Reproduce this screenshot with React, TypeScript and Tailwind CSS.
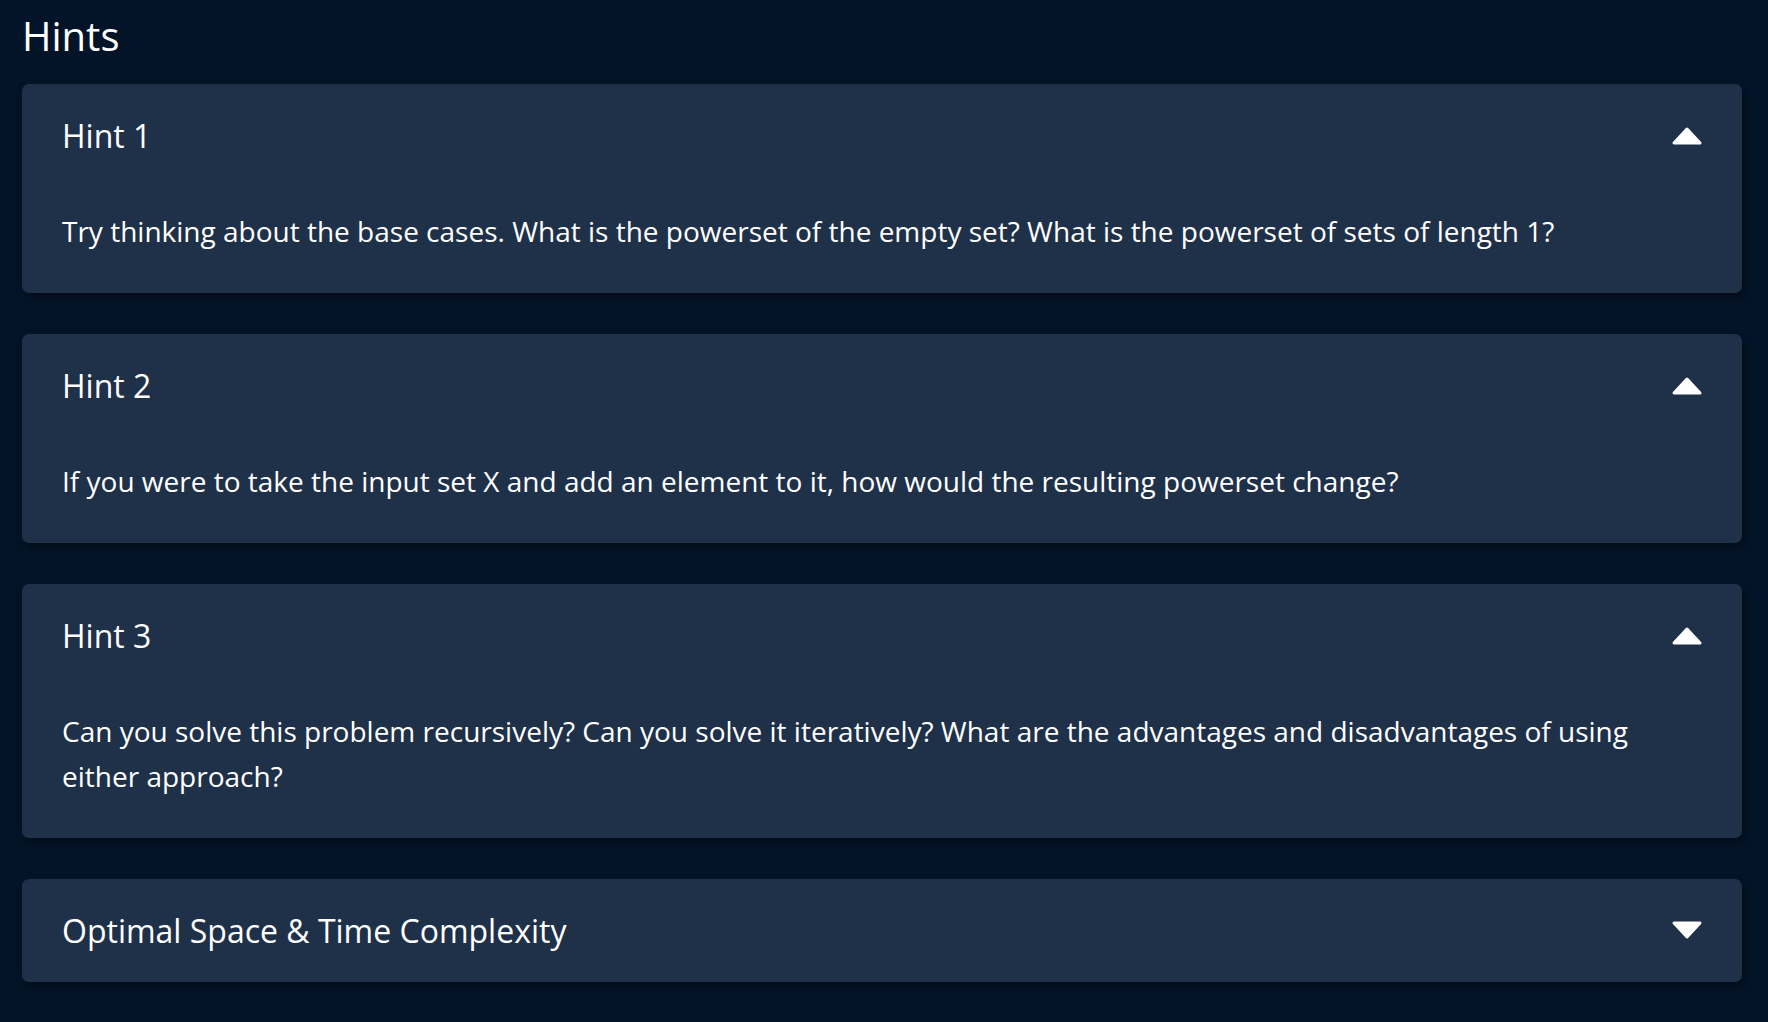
import React from "react";

const Caret = ({ up }: { up: boolean }) => (
  <svg width="32" height="19" viewBox="0 0 32 19" className="shrink-0">
    <polygon
      points={up ? "3,17 29,17 16,3" : "3,2 29,2 16,16"}
      fill="#ffffff"
      stroke="#ffffff"
      strokeWidth="3"
      strokeLinejoin="round"
    />
  </svg>
);

const Card = ({ title, body, open }: { title: string; body?: string; open: boolean }) => (
  <div className="rounded-[7px] bg-[#1f3049] shadow-[3px_4px_10px_rgba(0,0,0,0.45)]">
    <div className="flex h-[103px] items-center justify-between pl-[40px] pr-[39px]">
      <span className="text-[32px] leading-[48px] text-white">{title}</span>
      <Caret up={open} />
    </div>
    {open && body && (
      <div className="pl-[40px] pr-[80px] pt-[22px] pb-[39px] text-[28px] leading-[45px] text-white">{body}</div>
    )}
  </div>
);

export default function App() {
  return (
    <div
      className="min-h-[1022px] bg-[#041428] pl-[22px] pr-[26px] pt-[12px] pb-[30px]"
      style={{ fontFamily: '"Open Sans", "Noto Sans", sans-serif' }}
    >
      <h1 className="text-[40px] leading-[48px] font-medium text-white">Hints</h1>
      <div className="mt-[24px] flex flex-col gap-[41px]">
        <Card
          open
          title="Hint 1"
          body="Try thinking about the base cases. What is the powerset of the empty set? What is the powerset of sets of length 1?"
        />
        <Card
          open
          title="Hint 2"
          body="If you were to take the input set X and add an element to it, how would the resulting powerset change?"
        />
        <Card
          open
          title="Hint 3"
          body="Can you solve this problem recursively? Can you solve it iteratively? What are the advantages and disadvantages of using either approach?"
        />
        <Card open={false} title="Optimal Space & Time Complexity" />
      </div>
    </div>
  );
}
